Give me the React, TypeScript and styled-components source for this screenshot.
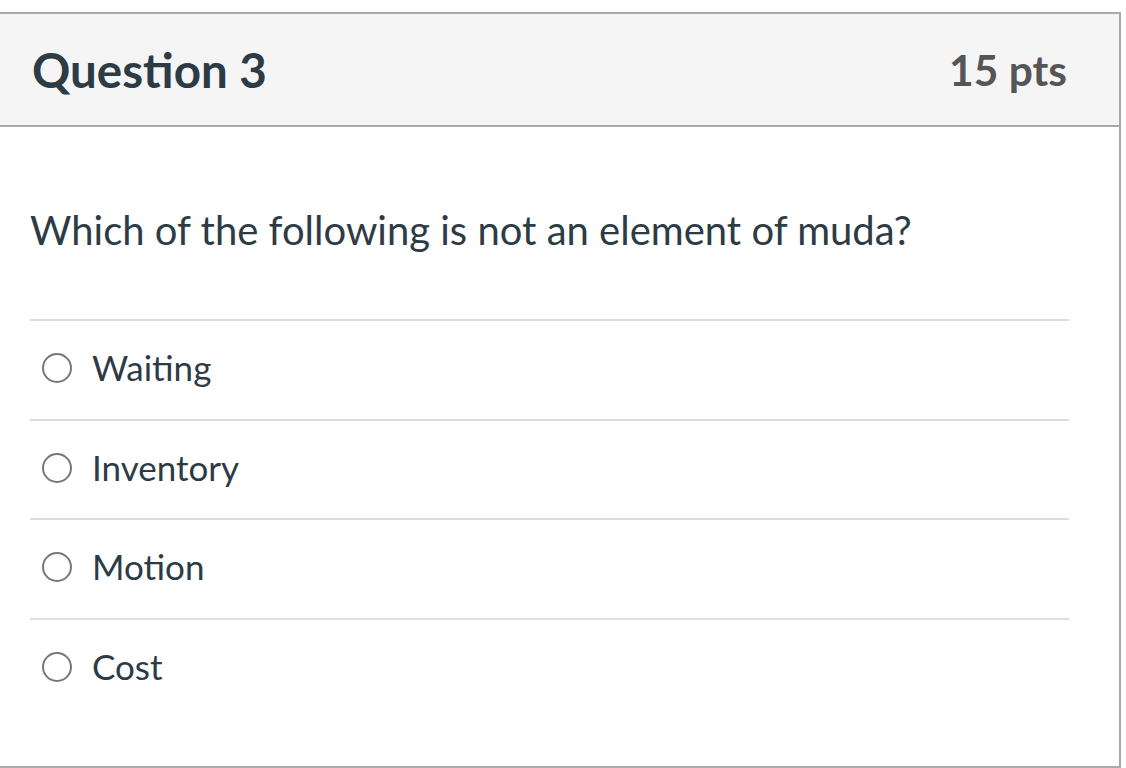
import styled, { createGlobalStyle } from 'styled-components';

const GlobalStyle = createGlobalStyle`
    body {
        margin: 0;
        background: #fff;
        font-family: Lato, "Open Sans", sans-serif;
        color: #2d3b45;
    }
`

const Card = styled.div`
    box-sizing: border-box;
    width: 1123px;
    margin: 12px 0 0 -2px;
    border: 2px solid #aaaaaa;
    background: #fff;
`

const Header = styled.div`
    display: flex;
    justify-content: space-between;
    align-items: center;
    height: 111px;
    padding: 0 52px 0 32px;
    background: #f5f5f5;
    border-bottom: 2px solid #aaaaaa;
`

const Title = styled.h2`
    margin: 0;
    font-size: 47.5px;
    font-weight: 700;
    color: #2d3b45;
`

const Points = styled.div`
    font-size: 42.5px;
    font-weight: 700;
    color: #555555;
`

const Body = styled.div`
    padding: 0 50px 49px 30px;
`

const Prompt = styled.p`
    margin: 0;
    padding: 75px 0 61px 0;
    font-size: 40px;
    line-height: 56px;
`

const Answer = styled.label`
    box-sizing: border-box;
    display: flex;
    align-items: center;
    gap: 20px;
    height: 99.5px;
    padding: 0 0 3px 12px;
    border-top: 2px solid #dddddd;
    font-size: 35px;
    cursor: pointer;
`

const Radio = styled.span`
    box-sizing: border-box;
    width: 30px;
    height: 30px;
    border-radius: 50%;
    border: 2.5px solid #777777;
    background: #fff;
    flex-shrink: 0;
`

const AnswerText = styled.span`
    margin-bottom: 2px;
`

const answers = ['Waiting', 'Inventory', 'Motion', 'Cost'];

export default function App() {
    return (
        <>
            <GlobalStyle />
            <Card>
                <Header>
                    <Title>Question 3</Title>
                    <Points>15 pts</Points>
                </Header>
                <Body>
                    <Prompt>Which of the following is not an element of muda?</Prompt>
                    {answers.map((a) =>
                        <Answer key={a}>
                            <Radio />
                            <AnswerText>{a}</AnswerText>
                        </Answer>
                    )}
                </Body>
            </Card>
        </>
    );
}
